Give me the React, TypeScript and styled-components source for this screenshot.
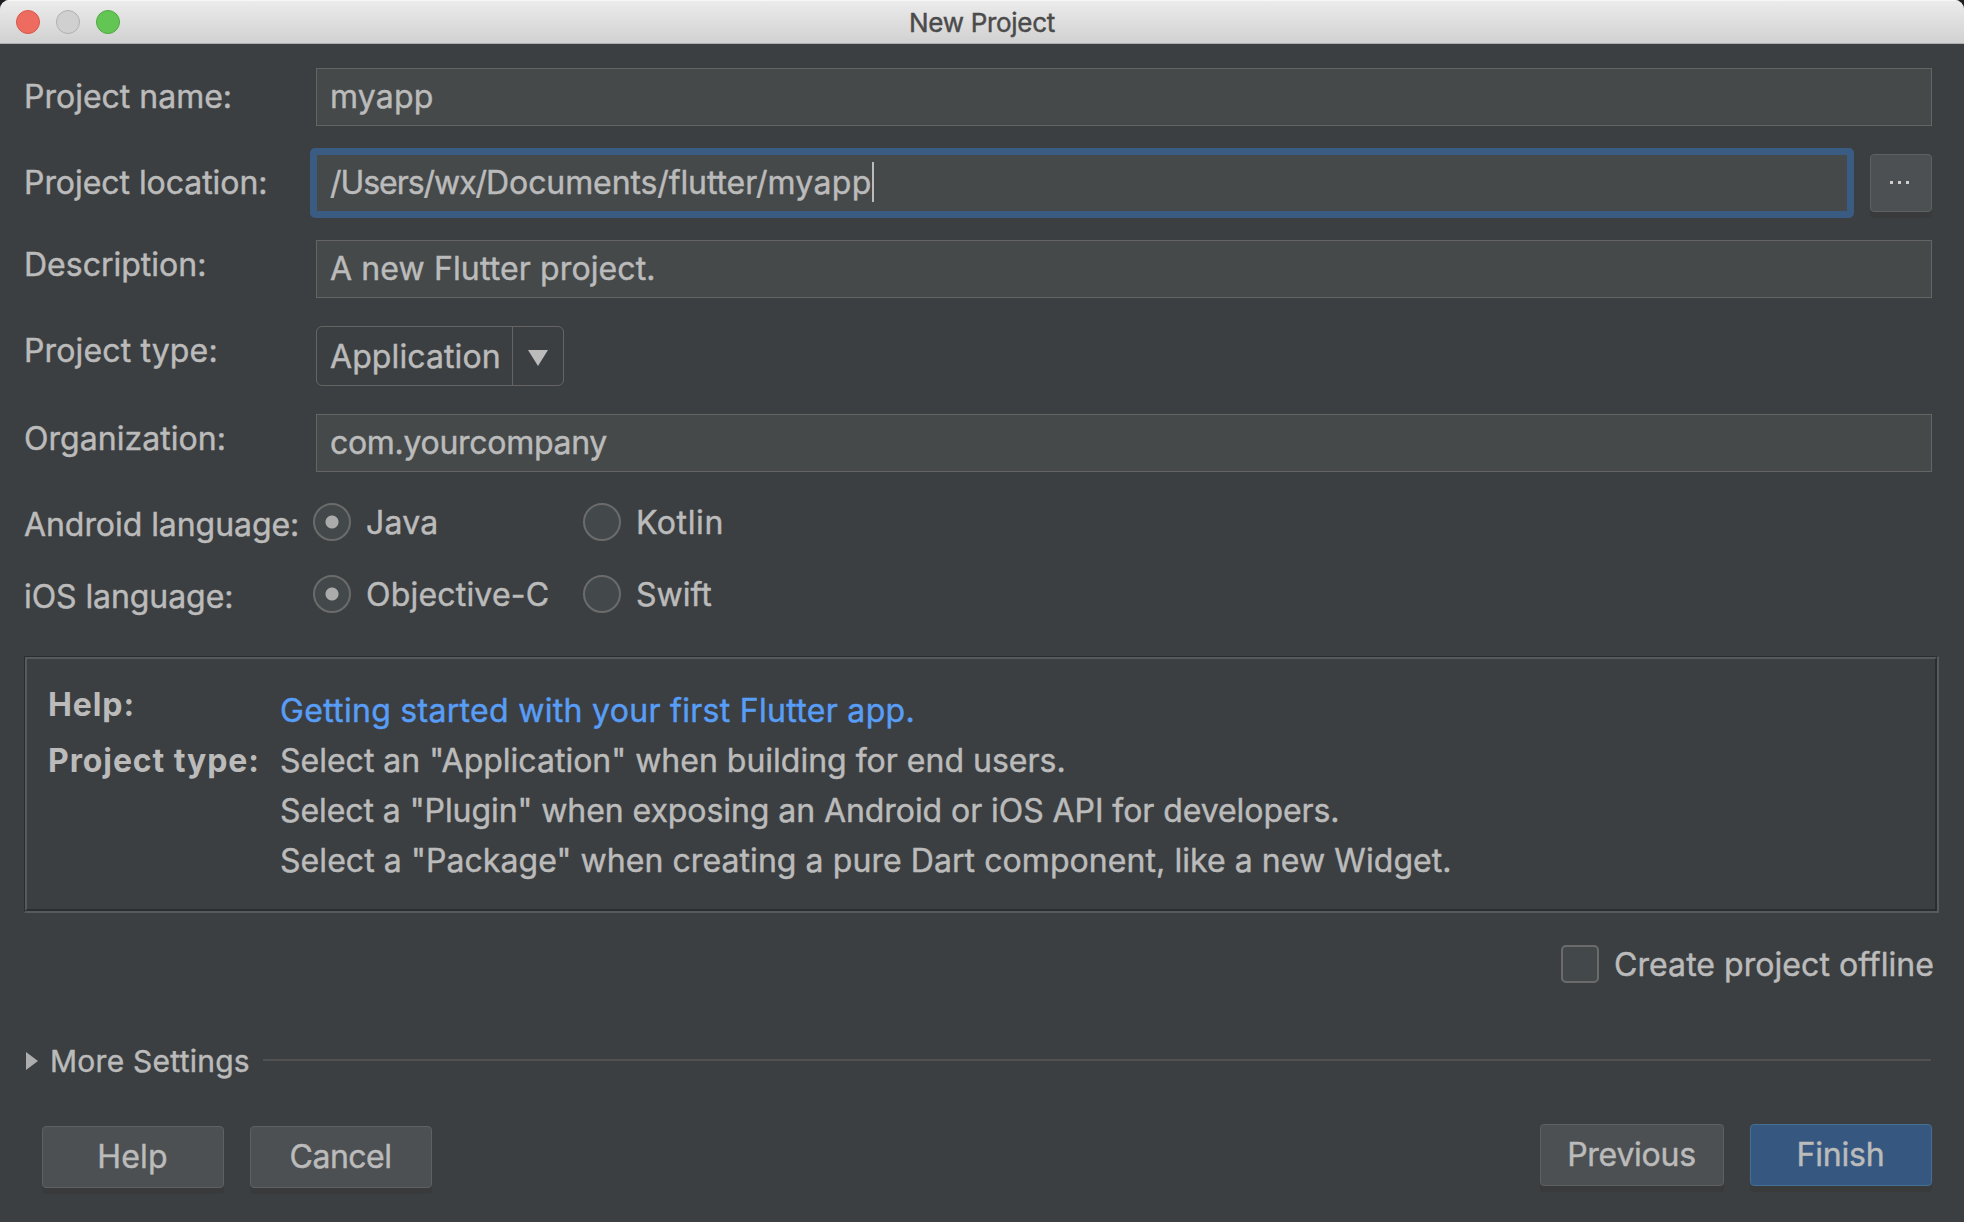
import React from "react";
import styled, { createGlobalStyle } from "styled-components";

const GlobalStyle = createGlobalStyle`
  *, *::before, *::after { box-sizing: border-box; }
  body {
    margin: 0;
    background: #1d1c20;
    font-family: Inter, "Liberation Sans", sans-serif;
    font-size: 32px;
    color: #bbbbbb;
    white-space: nowrap;
    -webkit-text-stroke: 0.45px currentColor;
  }
`;

const Window = styled.main`
  width: 1964px;
  height: 1222px;
  display: flex;
  flex-direction: column;
  background: #3c3f41;
  border-radius: 9px 9px 0 0;
  overflow: hidden;
`;

const TitleBar = styled.header`
  height: 44px;
  flex: none;
  display: grid;
  grid-template-columns: 1fr auto 1fr;
  align-items: start;
  padding: 0 16px;
  background: linear-gradient(#ececec, #d1d1d1);
  border-bottom: 1px solid #aeaeae;
  box-shadow: inset 0 1px 0 #f7f7f7;
`;

const Lights = styled.div`
  display: flex;
  gap: 16px;
  padding-top: 10px;
`;

const Light = styled.span<{ $fill: string; $edge: string }>`
  width: 24px;
  height: 24px;
  border-radius: 50%;
  background: ${(p) => p.$fill};
  border: 1px solid ${(p) => p.$edge};
`;

const Title = styled.h1`
  margin: 0;
  font-size: 26px;
  font-weight: 400;
  line-height: 45px;
  letter-spacing: -0.3px;
  color: #4b4b4b;
`;

const Text = styled.span<{ $ls?: number }>`
  letter-spacing: ${(p) => p.$ls ?? 0}px;
`;

const Form = styled.section`
  padding: 24px 32px 0 24px;
`;

const Row = styled.div<{ $h: number }>`
  display: grid;
  grid-template-columns: 292px 1fr;
  align-items: start;
  height: ${(p) => p.$h}px;
`;

const Label = styled.label<{ $lh?: number; $ls?: number }>`
  line-height: ${(p) => p.$lh ?? 49}px;
  letter-spacing: ${(p) => p.$ls ?? 0}px;
`;

const Field = styled.div<{ $ls?: number }>`
  height: 58px;
  padding-left: 13px;
  line-height: 55px;
  letter-spacing: ${(p) => p.$ls ?? 0}px;
  background: #45494a;
  border: 1px solid #646464;
`;

const LocationLine = styled.div`
  display: grid;
  grid-template-columns: 1532px 62px;
  justify-content: space-between;
`;

const FocusedField = styled.div`
  display: flex;
  align-items: flex-start;
  height: 70px;
  margin: -6px;
  padding-left: 13px;
  line-height: 55px;
  background: #45494a;
  border: 7px solid #3a5c82;
  border-radius: 5px;
`;

const Caret = styled.span`
  width: 2px;
  height: 40px;
  margin-top: 7px;
  background: #bbbbbb;
`;

const Button = styled.button<{ $w: number; $h?: number; $primary?: boolean; $ls?: number }>`
  width: ${(p) => p.$w}px;
  height: ${(p) => p.$h ?? 62}px;
  padding: 0 1px 1px 0;
  font: inherit;
  line-height: 57px;
  letter-spacing: ${(p) => p.$ls ?? 0}px;
  color: #bbbbbb;
  background: ${(p) => (p.$primary ? "#365880" : "#4c5052")};
  border: 1px solid ${(p) => (p.$primary ? "#456f93" : "#5e6162")};
  border-radius: 4px;
  box-shadow: 0 6px 0 #383a3b;
`;

const BrowseButton = styled(Button)`
  display: flex;
  align-items: center;
  justify-content: center;
  gap: 5px;
`;

const Dot = styled.i`
  width: 3px;
  height: 3px;
  margin: 0 1px 1px -1px;
  background: #cfcfcf;
`;

const Combo = styled.div`
  display: grid;
  grid-template-columns: 196px 1fr;
  width: 248px;
  height: 60px;
  border: 1px solid #646464;
  border-radius: 6px;
`;

const ComboValue = styled.span`
  padding-left: 13px;
  line-height: 59px;
  letter-spacing: 0.1px;
  border-right: 1px solid #646464;
`;

const ComboArrow = styled.span`
  display: flex;
  justify-content: center;
  padding-top: 23px;
`;

const Radios = styled.div`
  display: grid;
  grid-template-columns: 270px auto;
  justify-content: start;
  margin-left: -3px;
`;

const RadioItem = styled.label`
  display: flex;
  gap: 15px;
  line-height: 45px;
`;

const RadioCircle = styled.span<{ $on?: boolean }>`
  width: 38px;
  height: 38px;
  margin-top: 3px;
  border-radius: 50%;
  border: 2px solid #6b6b6b;
  background: ${(p) =>
    p.$on ? "radial-gradient(circle, #ababab 6px, #43494a 7px)" : "#43494a"};
`;

const HelpOuter = styled.section`
  margin: 12px 25px 0 24px;
  height: 257px;
  border-style: solid;
  border-width: 1px 2px 2px 1px;
  border-color: #2b2d2e #575a5c #575a5c #2b2d2e;
`;

const HelpInner = styled.div`
  display: grid;
  grid-template-columns: 232px 1fr;
  height: 100%;
  padding: 21px 0 0 21px;
  line-height: 50px;
  border-style: solid;
  border-width: 2px;
  border-color: #575a5c #2b2d2e #2b2d2e #575a5c;
`;

const HelpHeads = styled.div`
  display: flex;
  flex-direction: column;
  gap: 6px;
  font-weight: 700;
  letter-spacing: 0.9px;
  -webkit-text-stroke-width: 0;
`;

const HelpLines = styled.div`
  display: flex;
  flex-direction: column;
  padding-top: 6px;
`;

const Link = styled.a`
  color: #589df6;
  letter-spacing: 0.3px;
`;

const Offline = styled.label`
  display: flex;
  justify-content: flex-end;
  gap: 15px;
  margin-top: 32px;
  padding-right: 30px;
  line-height: 40px;
  height: 38px;
`;

const CheckBox = styled.span`
  width: 38px;
  height: 38px;
  border: 2px solid #6b6b6b;
  border-radius: 5px;
  background: #43494a;
`;

const More = styled.div`
  display: flex;
  align-items: center;
  height: 40px;
  margin: 58px 33px 0 26px;
  font-size: 30px;
  line-height: 40px;
`;

const MoreText = styled.span`
  width: 213px;
  margin-left: 12px;
  letter-spacing: 0.25px;
`;

const Rule = styled.span`
  flex: 1;
  height: 2px;
  margin-bottom: 2px;
  background: #515151;
`;

const Footer = styled.footer`
  display: flex;
  justify-content: space-between;
  padding: 43px 32px 0 42px;
`;

const ButtonGroup = styled.div<{ $drop?: number }>`
  display: flex;
  gap: 26px;
  padding-top: ${(p) => p.$drop ?? 0}px;
`;

function Radio({ label, on, ls }: { label: string; on?: boolean; ls?: number }) {
  return (
    <RadioItem>
      <RadioCircle $on={on} />
      <Text $ls={ls}>{label}</Text>
    </RadioItem>
  );
}

export default function App() {
  return (
    <>
      <GlobalStyle />
      <Window>
        <TitleBar>
          <Lights>
            <Light $fill="#ed6b5f" $edge="#d9564b" />
            <Light $fill="#d0d0d0" $edge="#b0b0b0" />
            <Light $fill="#62c554" $edge="#51a842" />
          </Lights>
          <Title>New Project</Title>
        </TitleBar>

        <Form>
          <Row $h={86}>
            <Label $lh={57}>Project name:</Label>
            <Field $ls={0.2}>myapp</Field>
          </Row>
          <Row $h={86}>
            <Label $lh={57} $ls={-0.05}>Project location:</Label>
            <LocationLine>
              <FocusedField>
                <Text $ls={-1.05}>/Users/wx/</Text>
                <Text $ls={-0.1}>Documents/flutter/</Text>
                <Text $ls={0.35}>myapp</Text>
                <Caret />
              </FocusedField>
              <BrowseButton $w={62} $h={58} aria-label="Browse">
                <Dot />
                <Dot />
                <Dot />
              </BrowseButton>
            </LocationLine>
          </Row>
          <Row $h={86}>
            <Label>Description:</Label>
            <Field $ls={0.12}>A new Flutter project.</Field>
          </Row>
          <Row $h={88}>
            <Label $ls={0.15}>Project type:</Label>
            <Combo>
              <ComboValue>Application</ComboValue>
              <ComboArrow>
                <svg width="20" height="16" viewBox="0 0 20 16">
                  <path d="M0 0H20L10 16Z" fill="#bbbbbb" />
                </svg>
              </ComboArrow>
            </Combo>
          </Row>
          <Row $h={86}>
            <Label $ls={0.05}>Organization:</Label>
            <Field $ls={-0.3}>com.yourcompany</Field>
          </Row>
          <Row $h={72}>
            <Label $ls={-0.06}>Android language:</Label>
            <Radios>
              <Radio label="Java" on ls={0.2} />
              <Radio label="Kotlin" ls={0.6} />
            </Radios>
          </Row>
          <Row $h={72}>
            <Label $ls={-0.08}>iOS language:</Label>
            <Radios>
              <Radio label="Objective-C" on ls={0.2} />
              <Radio label="Swift" />
            </Radios>
          </Row>
        </Form>

        <HelpOuter>
          <HelpInner>
            <HelpHeads>
              <span>Help:</span>
              <span>Project type:</span>
            </HelpHeads>
            <HelpLines>
              <Link>Getting started with your first Flutter app.</Link>
              <Text>Select an "Application" when building for end users.</Text>
              <Text $ls={-0.07}>
                Select a "Plugin" when exposing an Android or iOS API for developers.
              </Text>
              <Text $ls={0.07}>
                Select a "Package" when creating a pure Dart component, like a new Widget.
              </Text>
            </HelpLines>
          </HelpInner>
        </HelpOuter>

        <Offline>
          <CheckBox />
          <Text $ls={0.05}>Create project offline</Text>
        </Offline>

        <More>
          <svg width="12" height="18" viewBox="0 0 12 18">
            <path d="M0 0L12 9L0 18Z" fill="#adadad" />
          </svg>
          <MoreText>More Settings</MoreText>
          <Rule />
        </More>

        <Footer>
          <ButtonGroup $drop={2}>
            <Button $w={182} $ls={0.2}>Help</Button>
            <Button $w={182} $ls={-0.5}>Cancel</Button>
          </ButtonGroup>
          <ButtonGroup>
            <Button $w={184} $ls={-0.25}>Previous</Button>
            <Button $w={182} $primary $ls={-0.2}>Finish</Button>
          </ButtonGroup>
        </Footer>
      </Window>
    </>
  );
}
